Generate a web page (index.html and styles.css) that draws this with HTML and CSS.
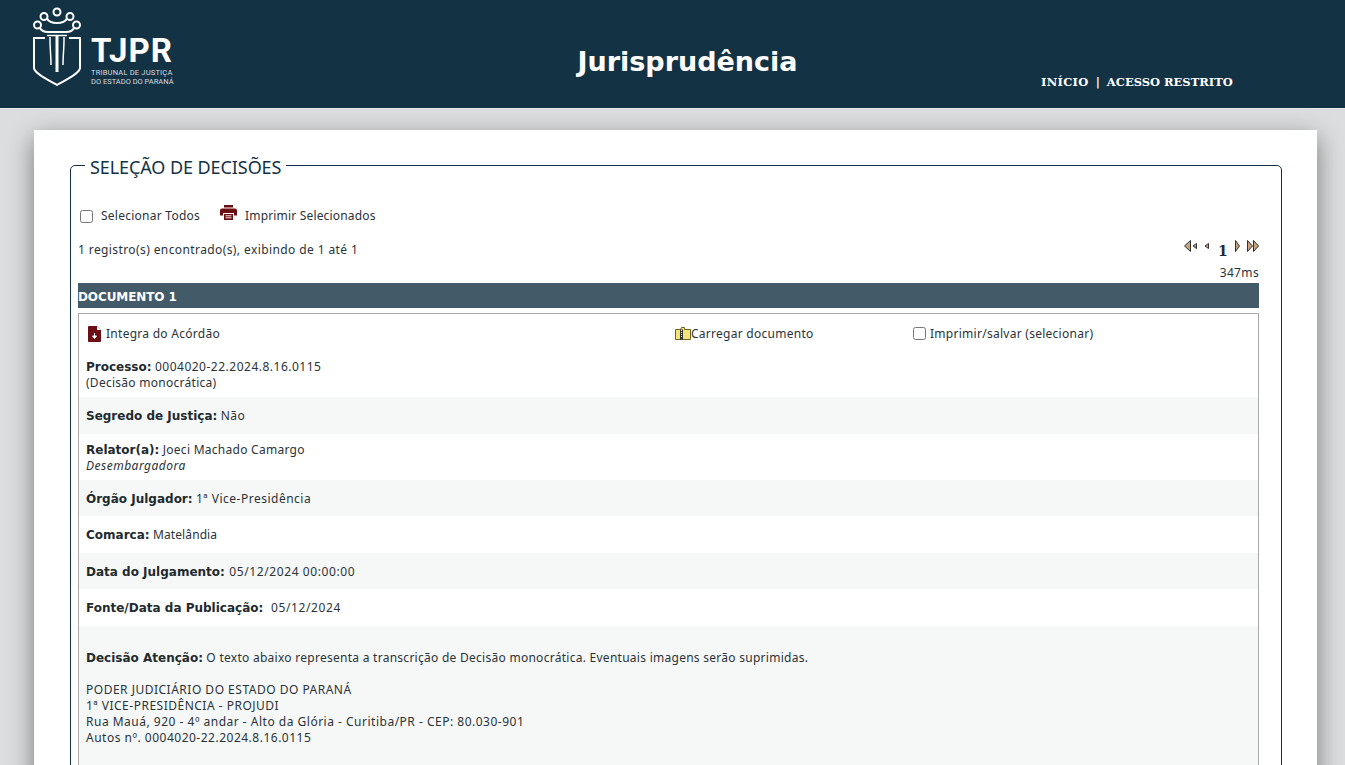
FILE: index.html
```html
<!DOCTYPE html>
<html lang="pt-BR">
<head>
<meta charset="utf-8">
<title>Jurisprudência</title>
<link rel="stylesheet" href="styles.css">
</head>
<body>
<header class="topbar">
  <div class="brand">
    <svg class="crest" width="52" height="82" viewBox="0 0 52 82" fill="none" stroke="#fff">
      <circle cx="25" cy="6" r="3.500" stroke-width="2"/>
      <circle cx="12" cy="10.500" r="3.500" stroke-width="2"/>
      <circle cx="38" cy="10.500" r="3.500" stroke-width="2"/>
      <circle cx="5.500" cy="19" r="3.500" stroke-width="2"/>
      <circle cx="44.500" cy="19" r="3.500" stroke-width="2"/>
      <path d="M15 12.500c3 6 17 6 20 0M8 22c2 4 6 4 8 4h18c2 0 6 0 8-4" stroke-width="2"/>
      <path d="M15 29.500h20" stroke-width="1.500"/>
      <path d="M13 32H2v30c0 5 14 12 23 17c9-5 23-12 23-17V32H37" stroke-width="2"/>
      <path d="M18 31v3c0 8 1 16 1 25M32 31v3c0 8-1 16-1 25" stroke-width="1.500"/>
      <path d="M25 29v37" stroke-width="3"/>
    </svg>
    <div class="brand-text">
      <div class="brand-name">TJPR</div>
      <div class="brand-sub"><span class="brand-line">TRIBUNAL DE JUSTIÇA</span><br>DO ESTADO DO PARANÁ</div>
    </div>
  </div>
  <h1 class="page-title">Jurisprudência</h1>
  <nav class="topnav"><a class="nav-home">INÍCIO</a><span class="nav-sep">|</span><a>ACESSO RESTRITO</a></nav>
</header>

<main class="card">
  <fieldset class="selection">
    <legend>SELEÇÃO DE DECISÕES</legend>

    <div class="select-row">
      <label class="check"><input type="checkbox"><span class="t-tight">Selecionar Todos</span></label>
      <svg class="print-icon" width="17" height="15" viewBox="0 0 17 15" fill="#6b0f14">
        <path d="M4 0h9v2.500H4zM2 3.500h13a2 2 0 0 1 2 2v5h-3V8H3v2.500H0v-5a2 2 0 0 1 2-2zM4 9h9v6H4z"/>
        <path d="M5.500 10.800h6M5.500 12.800h6" stroke="#fff" stroke-width=".9"/>
      </svg>
      <span class="t-print">Imprimir Selecionados</span>
    </div>

    <div class="results-row">
      <span class="t-wide">1 registro(s) encontrado(s), exibindo de 1 até 1</span>
      <div class="pager">
        <svg width="13" height="12" viewBox="0 0 13 12"><path class="arrow" d="M6.500.5v11L.5 6zM12.500 3.500v5L9 6z"/></svg>
        <svg class="pager-gap" width="5" height="12" viewBox="0 0 5 12"><path class="arrow" d="M4.500 3.500v5L1 6z"/></svg>
        <b class="pager-num">1</b>
        <svg width="5" height="12" viewBox="0 0 5 12"><path class="arrow" d="M.5.5v11L4.500 6z"/></svg>
        <svg class="pager-gap" width="12" height="12" viewBox="0 0 12 12"><path class="arrow" d="M.5.5v11L5.500 6zM6.500.5v11L11.500 6z"/></svg>
      </div>
    </div>
    <div class="timing">347ms</div>

    <div class="doc-bar">DOCUMENTO 1</div>
    <section class="doc">
      <div class="doc-actions">
        <div class="act-a">
          <svg width="14" height="16" viewBox="0 0 14 16"><path d="M1 0h8l4 4v11a1 1 0 0 1-1 1H1a1 1 0 0 1-1-1V1a1 1 0 0 1 1-1z" fill="#6b0f14"/><path d="M9 0l4 4H9z" fill="#fff"/><path d="M6.500 7v4M4.500 10l2 2.500 2-2.500z" stroke="#fff" fill="#fff"/></svg>
          <span>Integra do Acórdão</span>
        </div>
        <div class="act-b">
          <svg width="16" height="13" viewBox="0 0 16 13"><path d="M.5 2.500h5l1-2h3v2h6v10H.5z" fill="#f4e27a" stroke="#6b6420"/><path d="M5 2.500h3v10H5z" fill="#333"/><path d="M6 3.500h1M6 5.500h1M6 7.500h1M6 9.500h1" stroke="#fff"/></svg><span>Carregar documento</span>
        </div>
        <label class="check act-c"><input type="checkbox"><span>Imprimir/salvar (selecionar)</span></label>
      </div>

      <div class="row row-first"><b>Processo:</b> <span class="t-num">0004020-22.2024.8.16.0115</span><br>(Decisão monocrática)</div>
      <div class="row alt"><b>Segredo de Justiça:</b> <span class="t-num">Não</span></div>
      <div class="row row-two"><b>Relator(a):</b> Joeci Machado Camargo<br><i class="t-num">Desembargadora</i></div>
      <div class="row alt"><b>Órgão Julgador:</b> <span class="t-num">1ª Vice-Presidência</span></div>
      <div class="row"><b>Comarca:</b> <span class="t-tightest">Matelândia</span></div>
      <div class="row alt"><b>Data do Julgamento:</b> <span class="t-date">05/12/2024 00:00:00</span></div>
      <div class="row"><b>Fonte/Data da Publicação:</b>&nbsp; <span class="t-date">05/12/2024</span></div>
      <div class="row alt body-text">
        <p><b>Decisão Atenção:</b> O texto abaixo representa a transcrição de Decisão monocrática. Eventuais imagens serão suprimidas.</p>
        <p class="t-num">PODER JUDICIÁRIO DO ESTADO DO PARANÁ<br>1ª VICE-PRESIDÊNCIA - PROJUDI<br>Rua Mauá, 920 - 4º andar - Alto da Glória - Curitiba/PR - CEP: 80.030-901<br>Autos nº. 0004020-22.2024.8.16.0115</p>
      </div>
    </section>
  </fieldset>
</main>
</body>
</html>
```
FILE: styles.css
```css
* { box-sizing: border-box; }
html, body { height: 100%; }
body {
  margin: 0;
  background: #dcddde;
  font: 12px/16px "Noto Sans", "DejaVu Sans", sans-serif;
  letter-spacing: .27px;
  color: #2b3338;
  overflow: hidden;
}
b {
  font-family: "DejaVu Sans", sans-serif;
  letter-spacing: 0;
  color: #222a2e;
}
.t-num { letter-spacing: .5px; }
.t-date { letter-spacing: .6px; margin-left: 1px; }
.t-wide { letter-spacing: .4px; }
.t-tight { letter-spacing: .25px; }
.t-print { letter-spacing: .17px; }
.t-tightest { letter-spacing: .1px; }
.topbar {
  height: 109px;
  background: #133244;
  border-bottom: 1px solid #e8e8e8;
  display: flex;
  position: relative;
  color: #fff;
}
.brand {
  display: flex;
  align-items: flex-start;
  padding: 6px 0 0 32px;
}
.crest { display: block; }
.brand-text { margin: 28px 0 0 7px; letter-spacing: 0; }
.brand-name {
  font: 700 33px/34px "Roboto", "Liberation Sans", sans-serif;
  letter-spacing: 1.100px;
}
.brand-sub {
  font: 400 7.500px/9px "Roboto", "Liberation Sans", sans-serif;
  color: #d8dde0;
}
.brand-line { letter-spacing: .2px; }
.page-title {
  position: absolute;
  left: 30px;
  right: 0;
  top: 44px;
  margin: 0;
  text-align: center;
  letter-spacing: 0;
  font: 700 27px/36px "DejaVu Sans", sans-serif;
}
.topnav {
  position: absolute;
  left: 1041px;
  top: 74px;
  letter-spacing: 0;
  font: 700 11.500px/16px "DejaVu Serif", serif;
  white-space: nowrap;
}
.nav-home { letter-spacing: .3px; }
.nav-sep { margin: 0 7px; }
.card {
  margin: 21px 28px 0 34px;
  padding: 21px 35px 0 36px;
  background: #fff;
  min-height: 700px;
  box-shadow: 0 8px 24px rgba(0, 0, 0, .45);
}
.selection {
  margin: 0;
  padding: 27px 22px 0 7px;
  border: 1px solid #133244;
  border-radius: 5px;
  min-width: 0;
}
.selection legend {
  margin-left: 7px;
  padding: 4px 5px 0;
  font-size: 18px;
  line-height: 24px;
  letter-spacing: -.08px;
  color: #133244;
}
.select-row {
  display: flex;
  align-items: center;
  height: 20px;
  margin-left: 2px;
}
.check { display: flex; align-items: center; }
.check input { margin: 0 8px 0 0; width: 13px; height: 13px; }
.act-c input { margin-right: 4px; }
.print-icon { margin: -7px 8px 0 20px; }
.results-row {
  display: flex;
  justify-content: space-between;
  margin-top: 16px;
  height: 16px;
}
.pager { display: flex; align-items: flex-start; margin-top: -2px; }
.pager-gap { margin-left: 7px; }
.pager-num {
  width: 26px;
  padding-left: 9px;
  margin-top: 3px;
  font: 700 14px/16px "DejaVu Serif", serif;
}
.arrow { fill: #c7a27a; stroke: #333; stroke-width: 1; }
.timing { text-align: right; height: 25px; padding-top: 7px; letter-spacing: .35px; }
.doc-bar {
  height: 25px;
  background: #435a68;
  color: #fff;
  letter-spacing: -.1px;
  font: 700 12px/28px "DejaVu Sans", sans-serif;
}
.doc {
  margin-top: 5px;
  border: 1px solid #a9a9a9;
  border-bottom: 0;
  min-height: 500px;
}
.doc-actions {
  display: flex;
  align-items: center;
  height: 39px;
  padding-left: 9px;
}
.act-a { display: flex; align-items: center; gap: 4px; width: 587px; }
.act-b { display: flex; align-items: center; width: 238px; }
.row { padding: 11px 7px 9.500px; }
.row-first { padding: 6px 7px 6.400px; }
.row-two { padding: 8px 7px 6.100px; }
.alt { background: #f6f8f7; }
.body-text { padding-top: 24px; }
.body-text p { margin: 0 0 16px; }
```
